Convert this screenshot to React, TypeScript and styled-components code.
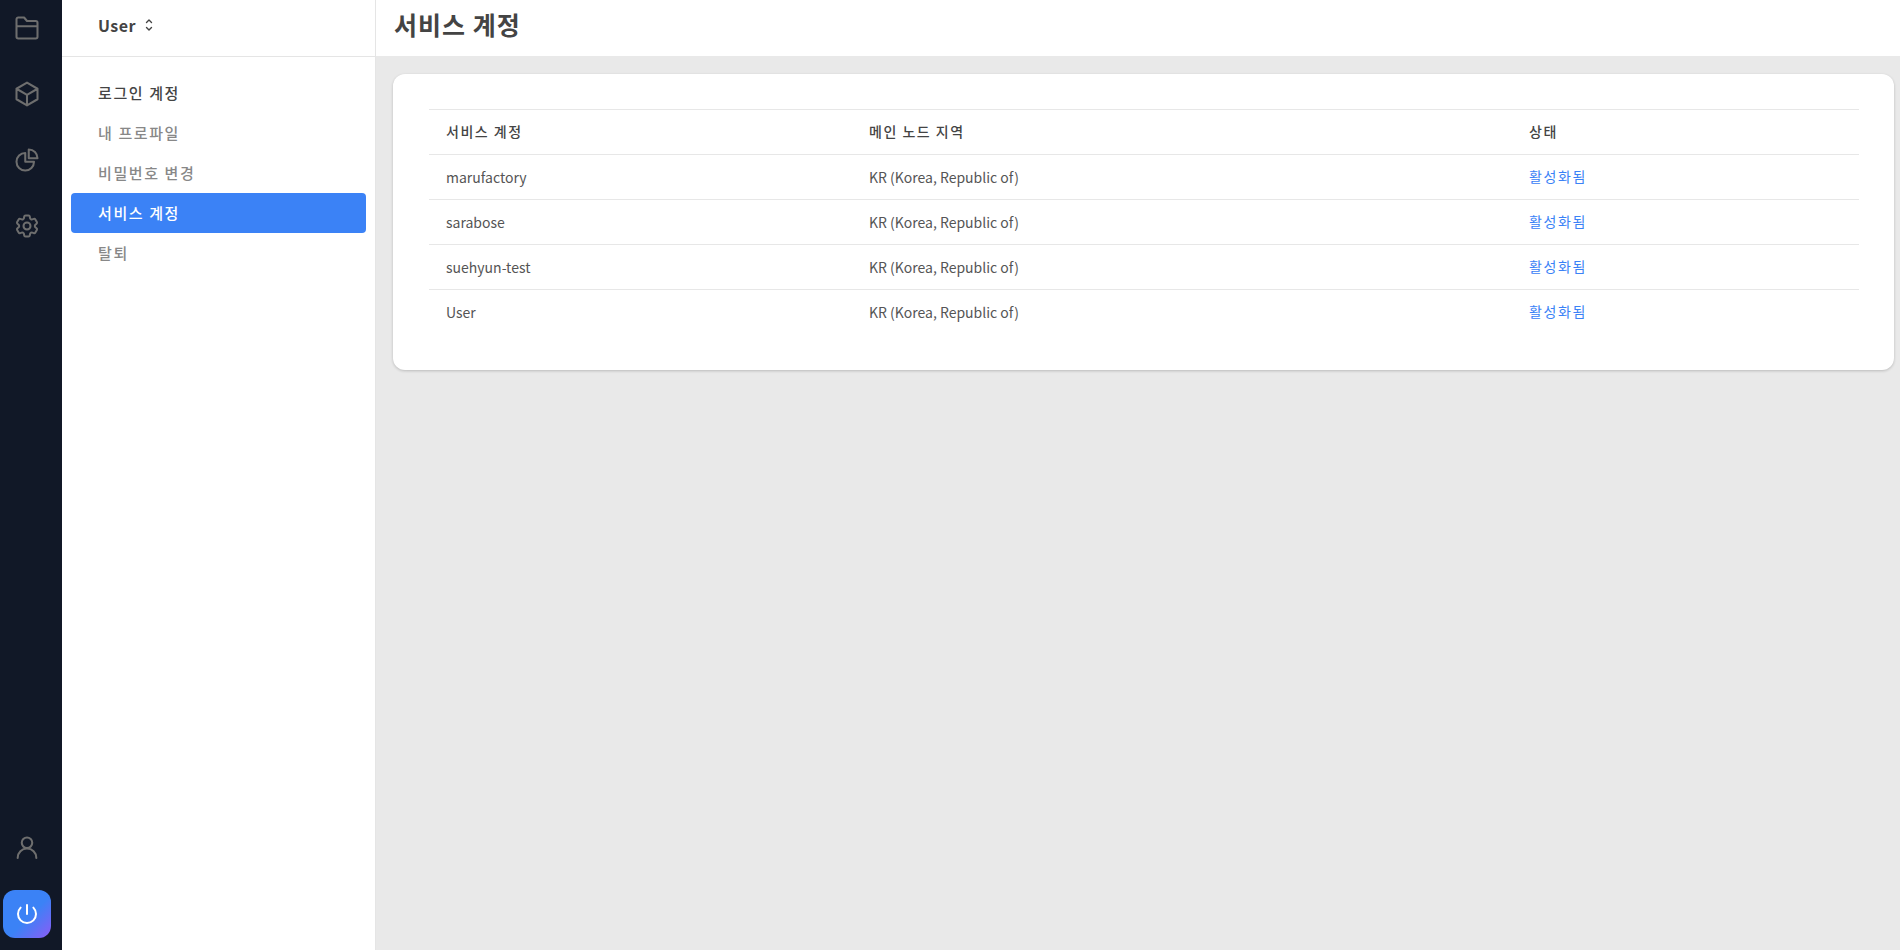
import { createGlobalStyle } from 'styled-components';
import styled from 'styled-components';

const GlobalStyle = createGlobalStyle`
  html, body {
    margin: 0;
    height: 100%;
    background: #e9e9e9;
    font-family: 'Noto Sans CJK KR', 'Noto Sans', sans-serif;
  }
  #root {
    height: 100%;
  }
`;

const ACCOUNTS = ['marufactory', 'sarabose', 'suehyun-test', 'User'];
const MENU = ['로그인 계정', '내 프로파일', '비밀번호 변경', '서비스 계정', '탈퇴'];

const ICONS = {
  folder:
    'M3 10.5V4.5A1.5 1.5 0 0 1 4.5 3h5l2.5 3h7.5A1.5 1.5 0 0 1 21 7.5v12a1.5 1.5 0 0 1-1.5 1.5h-15A1.5 1.5 0 0 1 3 19.5v-9h18',
  cube: 'm21 7.5-9-5.25L3 7.5m18 0-9 5.25m9-5.25v9l-9 5.25M3 7.5l9 5.25M3 7.5v9l9 5.25m0-9v9',
  pie: 'M10.5 6a7.5 7.5 0 1 0 7.5 7.5h-7.5V6ZM13.5 10.5H21A7.5 7.5 0 0 0 13.5 3v7.5Z',
  cog: 'M9.594 3.94c.09-.542.56-.94 1.11-.94h2.593c.55 0 1.02.398 1.11.94l.213 1.281c.063.374.313.686.645.87.074.04.147.083.22.127.325.196.72.257 1.075.124l1.217-.456a1.125 1.125 0 0 1 1.37.49l1.296 2.247a1.125 1.125 0 0 1-.26 1.431l-1.003.827c-.293.241-.438.613-.43.992a7.723 7.723 0 0 1 0 .255c-.008.378.137.75.43.991l1.004.827c.424.35.534.955.26 1.43l-1.298 2.247a1.125 1.125 0 0 1-1.369.491l-1.217-.456c-.355-.133-.75-.072-1.076.124a6.47 6.47 0 0 1-.22.128c-.331.183-.581.495-.644.869l-.213 1.281c-.09.543-.56.94-1.11.94h-2.594c-.55 0-1.019-.398-1.11-.94l-.213-1.281c-.062-.374-.312-.686-.644-.87a6.52 6.52 0 0 1-.22-.127c-.325-.196-.72-.257-1.076-.124l-1.217.456a1.125 1.125 0 0 1-1.369-.49l-1.297-2.247a1.125 1.125 0 0 1 .26-1.431l1.004-.827c.292-.24.437-.613.43-.991a6.932 6.932 0 0 1 0-.255c.007-.38-.138-.751-.43-.992l-1.004-.827a1.125 1.125 0 0 1-.26-1.43l1.297-2.247a1.125 1.125 0 0 1 1.37-.491l1.216.456c.356.133.751.072 1.076-.124.072-.044.146-.086.22-.128.332-.183.582-.495.644-.869l.214-1.28ZM15 12a3 3 0 1 1-6 0 3 3 0 0 1 6 0Z',
  user: 'M16.5 7.5a4.5 4.5 0 1 1-9 0 4.5 4.5 0 0 1 9 0ZM4 20.5a8 8 0 0 1 16 0',
  power: 'M5.636 5.636a9 9 0 1 0 12.728 0M12 3v9',
};

const RailIcon = ({ d, size = 28, weight = 1.75 }: { d: string; size?: number; weight?: number }) => (
  <svg width={size} height={size} viewBox="0 0 24 24" fill="none" stroke="currentColor" strokeWidth={weight} strokeLinecap="round" strokeLinejoin="round">
    <path d={d} />
  </svg>
);

export default function App() {
  return (
    <>
      <GlobalStyle />
      <Page>
        <Rail>
          <RailGroup>
            <RailIcon d={ICONS.folder} />
            <RailIcon d={ICONS.cube} />
            <RailIcon d={ICONS.pie} />
            <RailIcon d={ICONS.cog} />
          </RailGroup>
          <RailFooter>
            <RailIcon d={ICONS.user} />
            <PowerButton>
              <RailIcon d={ICONS.power} size={24} weight={2} />
            </PowerButton>
          </RailFooter>
        </Rail>
        <Sidebar>
          <SidebarHeader>
            <span>User</span>
            <svg width="12" height="14" viewBox="0 0 12 14" fill="none" stroke="#444" strokeWidth={1.4} strokeLinecap="round" strokeLinejoin="round">
              <path d="M3.5 4.5 6 2l2.5 2.5M3.5 9.5 6 12l2.5-2.5" />
            </svg>
          </SidebarHeader>
          <Menu>
            {MENU.map((label, i) => (
              <MenuItem key={label} $active={i === 3} $strong={i === 0}>
                {label}
              </MenuItem>
            ))}
          </Menu>
        </Sidebar>
        <Main>
          <TopBar>
            <Title>서비스 계정</Title>
          </TopBar>
          <Content>
            <Card>
              <Row>
                <HeadCell>서비스 계정</HeadCell>
                <HeadCell>메인 노드 지역</HeadCell>
                <HeadCell>상태</HeadCell>
              </Row>
              {ACCOUNTS.map((name) => (
                <Row key={name}>
                  <Cell>{name}</Cell>
                  <Cell>KR (Korea, Republic of)</Cell>
                  <StatusCell>활성화됨</StatusCell>
                </Row>
              ))}
            </Card>
          </Content>
        </Main>
      </Page>
    </>
  );
}

const Page = styled.div`
  display: flex;
  height: 950px;
  overflow: hidden;
`;

const Rail = styled.aside`
  width: 62px;
  flex: none;
  box-sizing: border-box;
  background: #111827;
  color: #6e6e6e;
  padding: 14px 8px 12px 0;
  display: flex;
  flex-direction: column;
  justify-content: space-between;
  align-items: center;
`;

const RailGroup = styled.div`
  display: flex;
  flex-direction: column;
  gap: 38px;
`;

const RailFooter = styled.div`
  display: flex;
  flex-direction: column;
  align-items: center;
  gap: 28px;
`;

const PowerButton = styled.div`
  width: 48px;
  height: 48px;
  border-radius: 12px;
  display: flex;
  align-items: center;
  justify-content: center;
  color: #fff;
  background: linear-gradient(135deg, #3b82f6 55%, #8b5cf6 100%);
`;

const Sidebar = styled.nav`
  width: 314px;
  flex: none;
  box-sizing: border-box;
  background: #fff;
  border-right: 1px solid #e5e5e5;
`;

const SidebarHeader = styled.div`
  height: 57px;
  box-sizing: border-box;
  border-bottom: 1px solid #e5e5e5;
  padding: 0 0 6px 36px;
  display: flex;
  align-items: center;
  gap: 7px;
  font-size: 16px;
  font-weight: 700;
  letter-spacing: 0.5px;
  color: #444;
`;

const Menu = styled.div`
  display: flex;
  flex-direction: column;
  padding: 16px 9px 0;
`;

const MenuItem = styled.div<{ $active: boolean; $strong: boolean }>`
  height: 40px;
  box-sizing: border-box;
  padding: 0 0 2px 27px;
  display: flex;
  align-items: center;
  border-radius: 4px;
  font-size: 15px;
  font-weight: 500;
  letter-spacing: 1.6px;
  color: ${(p) => (p.$active ? '#fff' : p.$strong ? '#444' : '#888')};
  background: ${(p) => (p.$active ? '#3b82f6' : 'transparent')};
`;

const Main = styled.main`
  flex: 1;
  min-width: 0;
  display: flex;
  flex-direction: column;
`;

const TopBar = styled.header`
  height: 56px;
  flex: none;
  box-sizing: border-box;
  background: #fff;
  padding: 0 18px 9px;
  display: flex;
  align-items: center;
`;

const Title = styled.h1`
  margin: 0;
  font-size: 25px;
  font-weight: 700;
  letter-spacing: 1px;
  color: #444;
`;

const Content = styled.div`
  flex: 1;
  padding: 18px 6px 0 17px;
`;

const Card = styled.section`
  background: #fff;
  border-radius: 12px;
  box-shadow: 0 1px 3px rgba(0, 0, 0, 0.2);
  padding: 35px 35px 36px 36px;
`;

const Row = styled.div`
  display: grid;
  grid-template-columns: 423px 660px 1fr;
  height: 45px;
  box-sizing: border-box;
  border-top: 1px solid #e7e7e7;
  align-items: center;
`;

const HeadCell = styled.div`
  padding: 0 0 2px 17px;
  font-size: 14px;
  font-weight: 500;
  letter-spacing: 1.5px;
  color: #444;
`;

const Cell = styled.div`
  padding-left: 17px;
  font-size: 14px;
  color: #555;
`;

const StatusCell = styled(Cell)`
  padding-bottom: 2px;
  color: #3b82f6;
  letter-spacing: 1.6px;
`;
